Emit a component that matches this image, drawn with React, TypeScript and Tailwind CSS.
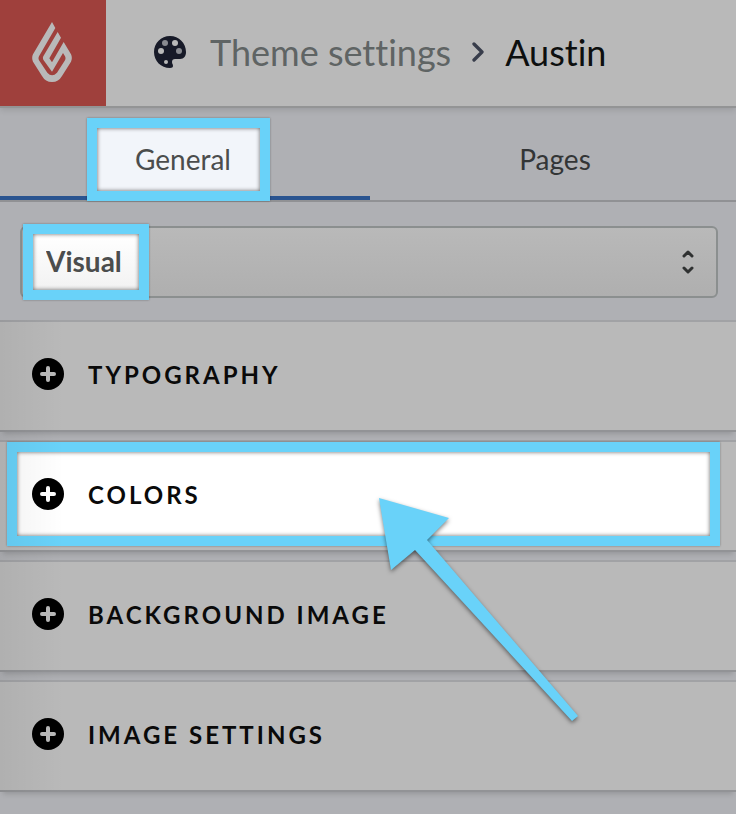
const sections = [
  { id: 'typography', title: 'Typography' },
  { id: 'colors', title: 'Colors', highlighted: true },
  { id: 'background', title: 'Background image' },
  { id: 'images', title: 'Image settings' },
];

// bright frame drawn over the dimmed page
const calloutFrame =
  'pointer-events-none absolute border-10 border-[#69d2f9] shadow-[0_0_2px_rgba(0,0,0,0.35),inset_0_0_4px_rgba(0,0,0,0.6)]';

function FlameLogo() {
  return (
    <svg viewBox="0 0 120 180" className="h-[60px] w-10" aria-hidden="true">
      <path
        fill="#b9b9b9"
        fillRule="evenodd"
        d="M60 0 L70 18 L21 103 Q18 109 21 115 L46 152 Q60 167 75 152 L99 115 Q102 109 99 103 L93 93 L60 149 L35 115 Q31 109 34 103 L77 30 L87 47 L52 109 L60 121 L95 60 L117 97 Q122 108 117 119 L90 162 Q80 180 60 180 Q40 180 30 162 L3 119 Q-2 108 3 97 Z"
      />
    </svg>
  );
}

function PaletteIcon() {
  return (
    <svg viewBox="0 0 32 32" className="size-8 shrink-0" aria-hidden="true">
      <path
        fill="#171a28"
        d="M16 0C7 0 0 7 0 16s7 16 16 16c2 0 3-1 3-2c0-2-1-2-1-4c0-2 1-3 3-3h5c4 0 6-3 6-7C32 7 25 0 16 0Z"
      />
      <circle cx="11" cy="7" r="3" fill="#888a90" />
      <circle cx="21" cy="7" r="3" fill="#b9b9b9" />
      <circle cx="7" cy="15" r="3" fill="#b9b9b9" />
      <circle cx="25" cy="15" r="3" fill="#888a90" />
      <circle cx="12" cy="26" r="2" fill="#b9b9b9" />
    </svg>
  );
}

function PlusIcon({ plusColor }: { plusColor: string }) {
  return (
    <svg viewBox="0 0 32 32" className="size-8 shrink-0" fill="none" aria-hidden="true">
      <circle cx="16" cy="16" r="16" fill="#000" />
      <path d="M16 10v12M10 16h12" stroke={plusColor} strokeWidth="4" strokeLinecap="round" />
    </svg>
  );
}

function Header() {
  return (
    <header className="flex h-[108px] border-b-2 border-[#939495] bg-[#b9b9b9] shadow-[0_2px_6px_rgba(0,0,0,0.12)]">
      <a href="#home" aria-label="Home" className="flex w-[106px] items-center justify-center bg-[#9f403c] pr-0.5 pb-0.5">
        <FlameLogo />
      </a>
      <nav className="flex items-center pb-0.5 pl-12 text-4xl">
        <PaletteIcon />
        <a href="#theme" className="ml-6 text-[#5f6464]">
          Theme settings
        </a>
        <svg viewBox="0 0 12 20" className="mx-5 h-5 w-3.5" fill="none" aria-hidden="true">
          <path d="M2 2l8 8-8 8" stroke="#383d4b" strokeWidth="3.3" strokeLinecap="round" strokeLinejoin="round" />
        </svg>
        <span className="text-[#0d0f0f]">Austin</span>
      </nav>
    </header>
  );
}

function Tabs() {
  return (
    <div className="-mr-1 grid h-[94px] grid-cols-2 border-b-2 border-[#909194] text-[28px] text-[#333536]" role="tablist">
      <button
        type="button"
        role="tab"
        aria-selected="true"
        className="relative border-b-4 border-[#2a5490] pt-4 pr-1 pb-0.5 text-[#4b4d4d]"
      >
        <span className={`${calloutFrame} top-[10px] left-[87px] h-[83px] w-[183px] bg-[#f2f5fa]`} />
        <span className="relative">General</span>
      </button>
      <button type="button" role="tab" aria-selected="false" className="pt-2.5">
        Pages
      </button>
    </div>
  );
}

function AreaSelect() {
  return (
    <div className="px-5 pt-6 pb-[22px]">
      <div className="relative -mr-0.5 flex h-[72px] items-center rounded-md border-2 border-[#8b8f8f] bg-linear-to-b from-[#b9b9b9] to-[#afafaf]">
        <span className={`${calloutFrame} -top-1 left-px h-[76px] w-[126px] bg-linear-to-b from-white to-[#f2f2f2]`} />
        <select
          aria-label="Settings area"
          className="relative h-full w-full appearance-none bg-transparent pb-0.5 pl-6 text-[28px] font-bold text-[#4b4d4d]"
        >
          <option>Visual</option>
        </select>
        <svg viewBox="0 0 12 24" className="pointer-events-none absolute right-[22px] h-6 w-3" fill="none" aria-hidden="true">
          <path
            d="M2 6l4-4 4 4M2 18l4 4 4-4"
            stroke="#2f3131"
            strokeWidth="3"
            strokeLinecap="round"
            strokeLinejoin="round"
          />
        </svg>
      </div>
    </div>
  );
}

function Arrow() {
  return (
    <svg
      viewBox="0 0 204 228"
      className="pointer-events-none absolute top-[54px] left-[377px] z-10 h-[228px] w-[204px] overflow-visible drop-shadow-[0_2px_2px_rgba(0,0,0,0.5)]"
      aria-hidden="true"
    >
      <path fill="#69d2f9" d="M2 2L72 22L50 44L201 220L195 225L38 54L14 74Z" />
    </svg>
  );
}

function Section({ title, highlighted = false }: { title: string; highlighted?: boolean }) {
  return (
    <section className="relative border-y-2 border-t-[#a1a2a5] border-b-[#929396] bg-[#b9b9b9] shadow-[0_5px_5px_-3px_rgba(0,0,0,0.15)]">
      {highlighted && <span className={`${calloutFrame} top-0 right-4 bottom-1 left-[7px] bg-white`} />}
      <h2>
        <button
          type="button"
          aria-expanded="false"
          className="relative flex h-[108px] w-full items-center gap-6 px-8 pb-1 text-2xl font-bold tracking-[3px] text-[#0a0a0a] uppercase"
        >
          <PlusIcon plusColor={highlighted ? '#fff' : '#b9b9b9'} />
          <span className="pt-0.5">{title}</span>
        </button>
      </h2>
      {highlighted && <Arrow />}
    </section>
  );
}

export default function App() {
  return (
    <div className="relative min-h-screen overflow-hidden bg-[#afb0b4] font-['Lato',sans-serif] [font-variant-ligatures:none]">
      <Header />
      <Tabs />
      <AreaSelect />
      <main className="relative flex flex-col gap-2">
        {sections.map((section) => (
          <Section key={section.id} title={section.title} highlighted={section.highlighted} />
        ))}
        {/* soft shade along the left edge of the panel */}
        <div className="pointer-events-none absolute inset-y-0 left-0 w-16 bg-linear-to-r from-black/5 to-transparent" />
      </main>
    </div>
  );
}
